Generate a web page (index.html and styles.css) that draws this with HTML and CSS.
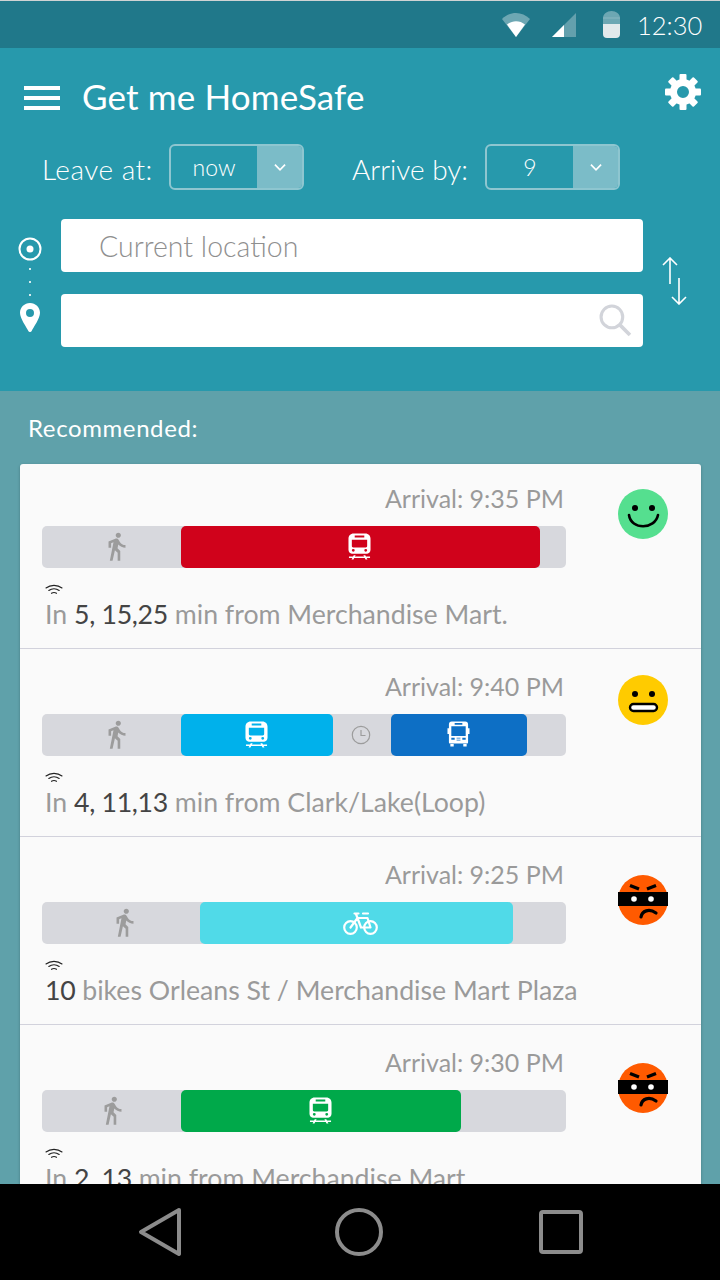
FILE: index.html
```html
<!DOCTYPE html>
<html lang="en">
<head>
    <meta charset="UTF-8">
    <title>Get me HomeSafe</title>
    <link rel="stylesheet" href="styles.css">
</head>
<body>
<svg class="defs" width="0" height="0">
    <symbol id="walk" viewBox="5 1 15 23">
        <path d="M13.5 5.5c1.1 0 2-.9 2-2s-.9-2-2-2-2 .9-2 2 .9 2 2 2zM9.8 8.9L7 23h2.1l1.8-8 2.1 2v6h2v-7.5l-2.1-2 .6-3C14.8 12 16.8 13 19 13v-2c-1.900 0-3.500-1-4.300-2.400l-1-1.600c-.4-.6-1-1-1.700-1-.3 0-.5.1-.8.1L6 8.300V13h2V9.600l1.800-.7"/>
    </symbol>
    <symbol id="train" viewBox="0 0 24 27">
        <path fill-rule="evenodd" d="M6 0h12c3.500 0 5.500 2.500 5.500 5.500V17c0 2-1.500 4-3.500 4H4c-2 0-3.500-2-3.500-4V5.500C.5 2.500 2.500 0 6 0zM7 2v2h10V2zM4 6.500V13c0 .8.5 1.500 1.500 1.500h13c1 0 1.500-.7 1.500-1.500V6.500zM5.500 16a1.500 1.500 0 1 0 0 3 1.500 1.500 0 0 0 0-3zM18.500 16a1.500 1.500 0 1 0 0 3 1.500 1.500 0 0 0 0-3z"/>
        <path d="M6 22.500h2l-.8 1.500h9.600l-.8-1.500h2l.8 1.500H23v1.500h-3.500l.8 1.500h-2l-.8-1.500H6.500l-.8 1.500h-2l.8-1.500H1V24h4.200z"/>
    </symbol>
    <symbol id="bus" viewBox="0 0 24 26">
        <path fill-rule="evenodd" d="M5 0h14c2 0 3 1.200 3 3v4h1.500v6H22v8.500c0 .8-.5 1.300-1 1.500H3c-.5-.2-1-.7-1-1.500V13H.5V7H2V3c0-1.800 1-3 3-3zM8 1.500v1.800h8V1.500zM4.500 5v10h15V5zM4.500 17v2h3.500v-2zM16 17v2h3.500v-2zM10 17v.8h4V17zM10 19v.8h4V19z"/>
        <path d="M3.500 23.500h3.500V26H3.500zM17 23.500h3.500V26H17z"/>
    </symbol>
    <symbol id="bike" viewBox="0 0 35 23">
        <g fill="none" stroke="currentColor" stroke-width="2.200" stroke-linecap="round" stroke-linejoin="round">
            <circle cx="7.500" cy="15.500" r="6.300"/>
            <circle cx="27.500" cy="15.500" r="6.300"/>
            <path d="M7.500 15.500L14.500 6h10l3 9.500H18L13 2M14.500 6l3.500 9.500M11.500 1.500h4M20 1.500h5"/>
        </g>
    </symbol>
    <symbol id="feed" viewBox="0 0 18 11">
        <g fill="none" stroke="currentColor" stroke-width="1.100" stroke-linecap="round">
            <path d="M1 4C5.500.5 12.500.5 17 4"/>
            <path d="M3.800 6.500C6.800 4.300 11.200 4.300 14.200 6.500"/>
            <path d="M6.500 9.300C8 8.300 10 8.300 11.500 9.300"/>
        </g>
    </symbol>
    <symbol id="chevron" viewBox="0 0 12 8">
        <path d="M1.500 1.500L6 6l4.500-4.500" fill="none" stroke="#fff" stroke-width="1.500"/>
    </symbol>
    <symbol id="angry" viewBox="0 0 50 50">
        <circle cx="25" cy="25" r="25" fill="#ff5a00"/>
        <rect y="17" width="50" height="14" fill="#000"/>
        <circle cx="16" cy="24" r="2.800" fill="#fff"/><circle cx="33" cy="24" r="2.800" fill="#fff"/>
        <path d="M12 10.500l9 3.500M38 10.500l-9 3.500" stroke="#000" stroke-width="3.400"/>
        <path d="M23 42c1-6 8-9 15-4" fill="none" stroke="#000" stroke-width="3.200" stroke-linecap="round"/>
    </symbol>
</svg>

<div class="phone">
    <div class="statusbar">
        <svg class="st-wifi" viewBox="0 0 28 24"><path d="M0 6C8-2 20-2 28 6L14 24z" fill="#fff" fill-opacity=".35"/><path d="M5 11.500c5-4.500 13-4.500 18 0L14 24z" fill="#fff"/></svg>
        <svg class="st-signal" viewBox="0 0 24 24"><path d="M24 0v24H0z" fill="#fff" fill-opacity=".3"/><path d="M12 12v12H0z" fill="#fff"/></svg>
        <svg class="st-batt" viewBox="0 0 17 27"><path d="M8.500 0C13 0 17 3 17 7v6H0V7c0-4 4-7 8.500-7z" fill="#fff" fill-opacity=".35"/><rect y="6.500" width="17" height="1" fill="#fff" fill-opacity=".2"/><path d="M0 13h17v10a4 4 0 0 1-4 4H4a4 4 0 0 1-4-4z" fill="#e2e9eb"/></svg>
        <span class="clock">12:30</span>
    </div>

    <div class="header">
        <div class="toolbar">
            <div class="burger"><i></i><i></i><i></i></div>
            <div class="title">Get me HomeSafe</div>
            <svg class="gear" viewBox="0 0 36 36">
                <path fill="#fff" fill-rule="evenodd" d="M18 5a13 13 0 1 0 0 26 13 13 0 0 0 0-26zm0 7a6 6 0 1 1 0 12 6 6 0 0 1 0-12z"/>
                <g fill="#fff">
                    <rect x="14.500" y="0" width="7" height="8" rx="1"/>
                    <rect x="14.500" y="0" width="7" height="8" rx="1" transform="rotate(45 18 18)"/>
                    <rect x="14.500" y="0" width="7" height="8" rx="1" transform="rotate(90 18 18)"/>
                    <rect x="14.500" y="0" width="7" height="8" rx="1" transform="rotate(135 18 18)"/>
                    <rect x="14.500" y="0" width="7" height="8" rx="1" transform="rotate(180 18 18)"/>
                    <rect x="14.500" y="0" width="7" height="8" rx="1" transform="rotate(225 18 18)"/>
                    <rect x="14.500" y="0" width="7" height="8" rx="1" transform="rotate(270 18 18)"/>
                    <rect x="14.500" y="0" width="7" height="8" rx="1" transform="rotate(315 18 18)"/>
                </g>
            </svg>
        </div>

        <div class="times">
            <span class="times-label first">Leave at:</span>
            <div class="select">
                <span class="select-val">now</span>
                <span class="select-btn"><svg class="chevron"><use href="#chevron"/></svg></span>
            </div>
            <span class="times-label second">Arrive by:</span>
            <div class="select">
                <span class="select-val">9</span>
                <span class="select-btn"><svg class="chevron"><use href="#chevron"/></svg></span>
            </div>
        </div>

        <div class="route">
            <div class="route-icons">
                <svg class="origin" viewBox="0 0 24 24"><circle cx="12" cy="12" r="10.500" fill="none" stroke="#fff" stroke-width="2"/><circle cx="12" cy="12" r="3.500" fill="#fff"/></svg>
                <div class="dots"><i></i><i></i><i></i></div>
                <svg class="pin" viewBox="0 0 20 29"><path fill="#fff" fill-rule="evenodd" d="M10 0c5.500 0 10 4.300 10 9.800 0 5.700-6.500 14.500-8.500 18.400-.7 1.100-2.300 1.100-3 0C6.500 24.300 0 15.500 0 9.800 0 4.300 4.500 0 10 0zm0 6a4 4 0 1 0 0 8 4 4 0 0 0 0-8z"/></svg>
            </div>
            <div class="fields">
                <div class="field"><span class="placeholder">Current location</span></div>
                <div class="field end">
                    <svg class="search" viewBox="0 0 32 32"><circle cx="12.500" cy="12.500" r="10.500" fill="none" stroke="#d2d4da" stroke-width="3"/><path d="M20 20l10 10" stroke="#d2d4da" stroke-width="3.500"/></svg>
                </div>
            </div>
            <svg class="swap" viewBox="0 0 28 48"><g fill="none" stroke="#fff" stroke-width="1.600"><path d="M9 1v26M2 8l7-7 7 7"/><path d="M18 21v26M11 40l7 7 7-7"/></g></svg>
        </div>
    </div>

    <div class="results">
        <div class="results-title">Recommended:</div>
        <div class="card">
            <div class="row">
                <div class="row-main">
                    <div class="arrival">Arrival: 9:35 PM</div>
                    <div class="bar">
                        <div class="walk"><svg class="ic-walk"><use href="#walk"/></svg></div>
                        <div class="seg red" style="width:359px"><svg class="ic-train"><use href="#train"/></svg></div>
                    </div>
                    <svg class="feed"><use href="#feed"/></svg>
                    <div class="info">In <b>5, 15,25</b> min from Merchandise Mart.</div>
                </div>
                <svg class="face" viewBox="0 0 50 50">
                    <circle cx="25" cy="25" r="25" fill="#55df8f"/>
                    <circle cx="17" cy="19" r="3"/><circle cx="34" cy="19" r="3"/>
                    <path d="M11 26c2 15 26 15 29 0" fill="none" stroke="#000" stroke-width="2.600" stroke-linecap="round"/>
                </svg>
            </div>
            <div class="row">
                <div class="row-main">
                    <div class="arrival">Arrival: 9:40 PM</div>
                    <div class="bar">
                        <div class="walk"><svg class="ic-walk"><use href="#walk"/></svg></div>
                        <div class="seg sky" style="width:152px"><svg class="ic-train"><use href="#train"/></svg></div>
                        <div class="wait">
                            <svg class="ic-clock" viewBox="0 0 20 20"><circle cx="10" cy="10" r="8.700" fill="none" stroke="#9c9c9c" stroke-width="1.200"/><path d="M10 5v5.500h4.500" fill="none" stroke="#9c9c9c" stroke-width="1.200"/></svg>
                        </div>
                        <div class="seg blue" style="width:136px"><svg class="ic-bus"><use href="#bus"/></svg></div>
                    </div>
                    <svg class="feed"><use href="#feed"/></svg>
                    <div class="info">In <b>4, 11,13</b> min from Clark/Lake(Loop)</div>
                </div>
                <svg class="face neutral" viewBox="0 0 50 50">
                    <circle cx="25" cy="25" r="25" fill="#ffcb00"/>
                    <circle cx="17" cy="19" r="3"/><circle cx="34" cy="19" r="3"/>
                    <rect x="12" y="29" width="27" height="7" rx="3.500" fill="#fff" stroke="#000" stroke-width="2.400"/>
                </svg>
            </div>
            <div class="row">
                <div class="row-main">
                    <div class="arrival">Arrival: 9:25 PM</div>
                    <div class="bar">
                        <div class="walk long"><svg class="ic-walk"><use href="#walk"/></svg></div>
                        <div class="seg cyan" style="width:313px"><svg class="ic-bike"><use href="#bike"/></svg></div>
                    </div>
                    <svg class="feed"><use href="#feed"/></svg>
                    <div class="info"><b>10</b> bikes Orleans St / Merchandise Mart Plaza</div>
                </div>
                <svg class="face low" viewBox="0 0 50 50"><use href="#angry"/></svg>
            </div>
            <div class="row">
                <div class="row-main">
                    <div class="arrival">Arrival: 9:30 PM</div>
                    <div class="bar">
                        <div class="walk left"><svg class="ic-walk"><use href="#walk"/></svg></div>
                        <div class="seg green" style="width:280px"><svg class="ic-train"><use href="#train"/></svg></div>
                    </div>
                    <svg class="feed"><use href="#feed"/></svg>
                    <div class="info">In <b>2, 13</b> min from Merchandise Mart.</div>
                </div>
                <svg class="face low" viewBox="0 0 50 50"><use href="#angry"/></svg>
            </div>
        </div>
    </div>

    <div class="navbar">
        <svg class="nav-back" viewBox="0 0 44 50"><path d="M41 3L3 25l38 22z" fill="none" stroke="#8c8c8c" stroke-width="4" stroke-linejoin="round"/></svg>
        <svg class="nav-home" viewBox="0 0 48 48"><circle cx="24" cy="24" r="22" fill="none" stroke="#8c8c8c" stroke-width="4"/></svg>
        <svg class="nav-recent" viewBox="0 0 44 44"><rect x="2" y="2" width="40" height="40" rx="2" fill="none" stroke="#8c8c8c" stroke-width="4"/></svg>
    </div>
</div>
</body>
</html>
```

FILE: styles.css
```css
* {
    margin: 0;
    padding: 0;
    box-sizing: border-box;
}

body {
    font-family: "Lato", "Liberation Sans", sans-serif;
    background: #000;
}

.defs {
    display: block;
    height: 0;
}

.phone {
    width: 720px;
    height: 1280px;
    display: flex;
    flex-direction: column;
    overflow: hidden;
}

/* status bar */
.statusbar {
    height: 48px;
    flex: none;
    background: #20788a;
    border-top: 1px solid #cfd3d4;
    display: flex;
    align-items: center;
    color: #fff;
    padding-left: 502px;
}

.st-wifi {
    width: 28px;
    height: 24px;
}

.st-signal {
    width: 24px;
    height: 24px;
    margin-left: 22px;
}

.st-batt {
    width: 17px;
    height: 27px;
    margin-left: 27px;
}

.clock {
    font-size: 25.500px;
    font-weight: 300;
    margin-left: 17px;
}

/* header */
.header {
    height: 343px;
    flex: none;
    background: #2799ac;
    color: #fff;
}

.toolbar {
    height: 96px;
    padding: 26px 19px 0 24px;
    display: flex;
    align-items: flex-start;
}

.burger {
    width: 36px;
    height: 24px;
    margin-top: 12px;
    display: flex;
    flex-direction: column;
    justify-content: space-between;
}

.burger i {
    display: block;
    height: 4px;
    background: #fff;
}

.title {
    font-size: 35px;
    line-height: 44px;
    letter-spacing: .15px;
    margin-left: 22px;
    flex: 1;
}

.gear {
    width: 36px;
    height: 36px;
}

.times {
    display: flex;
    align-items: center;
    padding-left: 42px;
    height: 46px;
}

.times-label {
    font-size: 28px;
    font-weight: 300;
    width: 127px;
    padding-top: 3px;
}

.times-label.first {
    letter-spacing: .5px;
}

.times-label.second {
    width: 133px;
    margin-left: 48px;
}

.select {
    width: 135px;
    height: 46px;
    border: 2px solid #8ec6d0;
    border-radius: 6px;
    display: flex;
    overflow: hidden;
}

.select-val {
    flex: 1;
    text-align: center;
    font-size: 23px;
    font-weight: 300;
    line-height: 42px;
}

.select-btn {
    width: 45px;
    background: #7bbcc8;
    display: flex;
    align-items: center;
    justify-content: center;
}

.chevron {
    width: 14px;
    height: 9px;
}

.route {
    display: flex;
    align-items: flex-start;
    margin-top: 29px;
}

.route-icons {
    width: 61px;
    padding: 18px 0 0 18px;
    display: flex;
    flex-direction: column;
}

.origin {
    width: 24px;
    height: 24px;
}

.dots {
    width: 24px;
    height: 42px;
    padding-top: 7px;
    display: flex;
    flex-direction: column;
    align-items: center;
    gap: 11px;
}

.dots i {
    display: block;
    width: 2px;
    height: 2px;
    background: #d4ebef;
}

.pin {
    width: 20px;
    height: 29px;
    margin-left: 2px;
}

.fields {
    width: 582px;
    display: flex;
    flex-direction: column;
    gap: 22px;
}

.field {
    height: 53px;
    background: #fff;
    border-radius: 4px;
    padding-left: 38px;
    display: flex;
    align-items: center;
}

.field.end {
    justify-content: flex-end;
    padding-right: 11px;
}

.placeholder {
    font-size: 28.500px;
    font-weight: 300;
    color: #8f8f8f;
}

.search {
    width: 33px;
    height: 33px;
}

.swap {
    width: 28px;
    height: 48px;
    margin: 38px 0 0 18px;
}

/* results */
.results {
    flex: 1;
    background: #5fa1aa;
    overflow: hidden;
    padding: 0 19px 0 20px;
}

.results-title {
    color: #fff;
    font-size: 24px;
    line-height: 28px;
    letter-spacing: .6px;
    padding: 23px 0 22px 8px;
}

.card {
    background: #fafafa;
    border-radius: 3px;
    box-shadow: 0 1px 3px rgba(0, 0, 0, .25);
}

.row {
    height: 188px;
    padding: 24px 0 0 22px;
    border-bottom: 1px solid #d2d2dc;
    display: flex;
    align-items: flex-start;
}

.row:first-child {
    height: 185px;
    padding-top: 21px;
}

.row-main {
    width: 524px;
}

.arrival {
    text-align: right;
    font-size: 25px;
    line-height: 26px;
    padding: 0 2px 2px 0;
    color: #9a9a9a;
}

.bar {
    height: 42px;
    margin-top: 13px;
    background: #d7d8dd;
    border-radius: 5px;
    display: flex;
}

.walk {
    width: 139px;
    padding-left: 65px;
    display: flex;
    align-items: center;
}

.walk.long {
    width: 158px;
    padding-left: 73px;
}

.walk.left {
    padding-left: 61px;
}

.ic-walk {
    width: 20px;
    height: 30px;
    fill: #9c9c9c;
}

.seg {
    border-radius: 5px;
    display: flex;
    justify-content: center;
    color: #fff;
    fill: #fff;
    padding-right: 2px;
}

.red { background: #d0021b; }
.sky { background: #00b1eb; }
.blue { background: #0d6fc5; }
.cyan { background: #50dae8; padding: 0 0 0 7px; }
.green { background: #00a94a; }

.wait {
    width: 58px;
    display: flex;
    align-items: center;
    justify-content: center;
    padding-right: 3px;
}

.ic-clock {
    width: 20px;
    height: 20px;
}

.ic-train {
    width: 23px;
    height: 27px;
    margin-top: 7px;
}

.ic-bus {
    width: 23px;
    height: 26px;
    margin-top: 7px;
}

.ic-bike {
    width: 35px;
    height: 23px;
    margin-top: 10px;
}

.feed {
    display: block;
    width: 18px;
    height: 11px;
    margin: 16px 0 0 3px;
    color: #222;
}

.info {
    font-size: 26.700px;
    line-height: 32px;
    margin: 3px 0 0 3px;
    color: #9a9a9a;
    white-space: nowrap;
}

.info b {
    font-weight: 400;
    color: #444;
    letter-spacing: -.3px;
}

.face {
    width: 50px;
    height: 50px;
    flex: none;
    margin: 4px 0 0 52px;
}

.face.neutral {
    margin-top: 2px;
}

.face.low {
    margin-top: 14px;
}

/* nav bar */
.navbar {
    height: 96px;
    flex: none;
    background: #000;
    display: flex;
    align-items: center;
    padding-left: 138px;
}

.nav-back {
    width: 44px;
    height: 50px;
}

.nav-home {
    width: 48px;
    height: 48px;
    margin-left: 153px;
}

.nav-recent {
    width: 44px;
    height: 44px;
    margin-left: 156px;
}
```
